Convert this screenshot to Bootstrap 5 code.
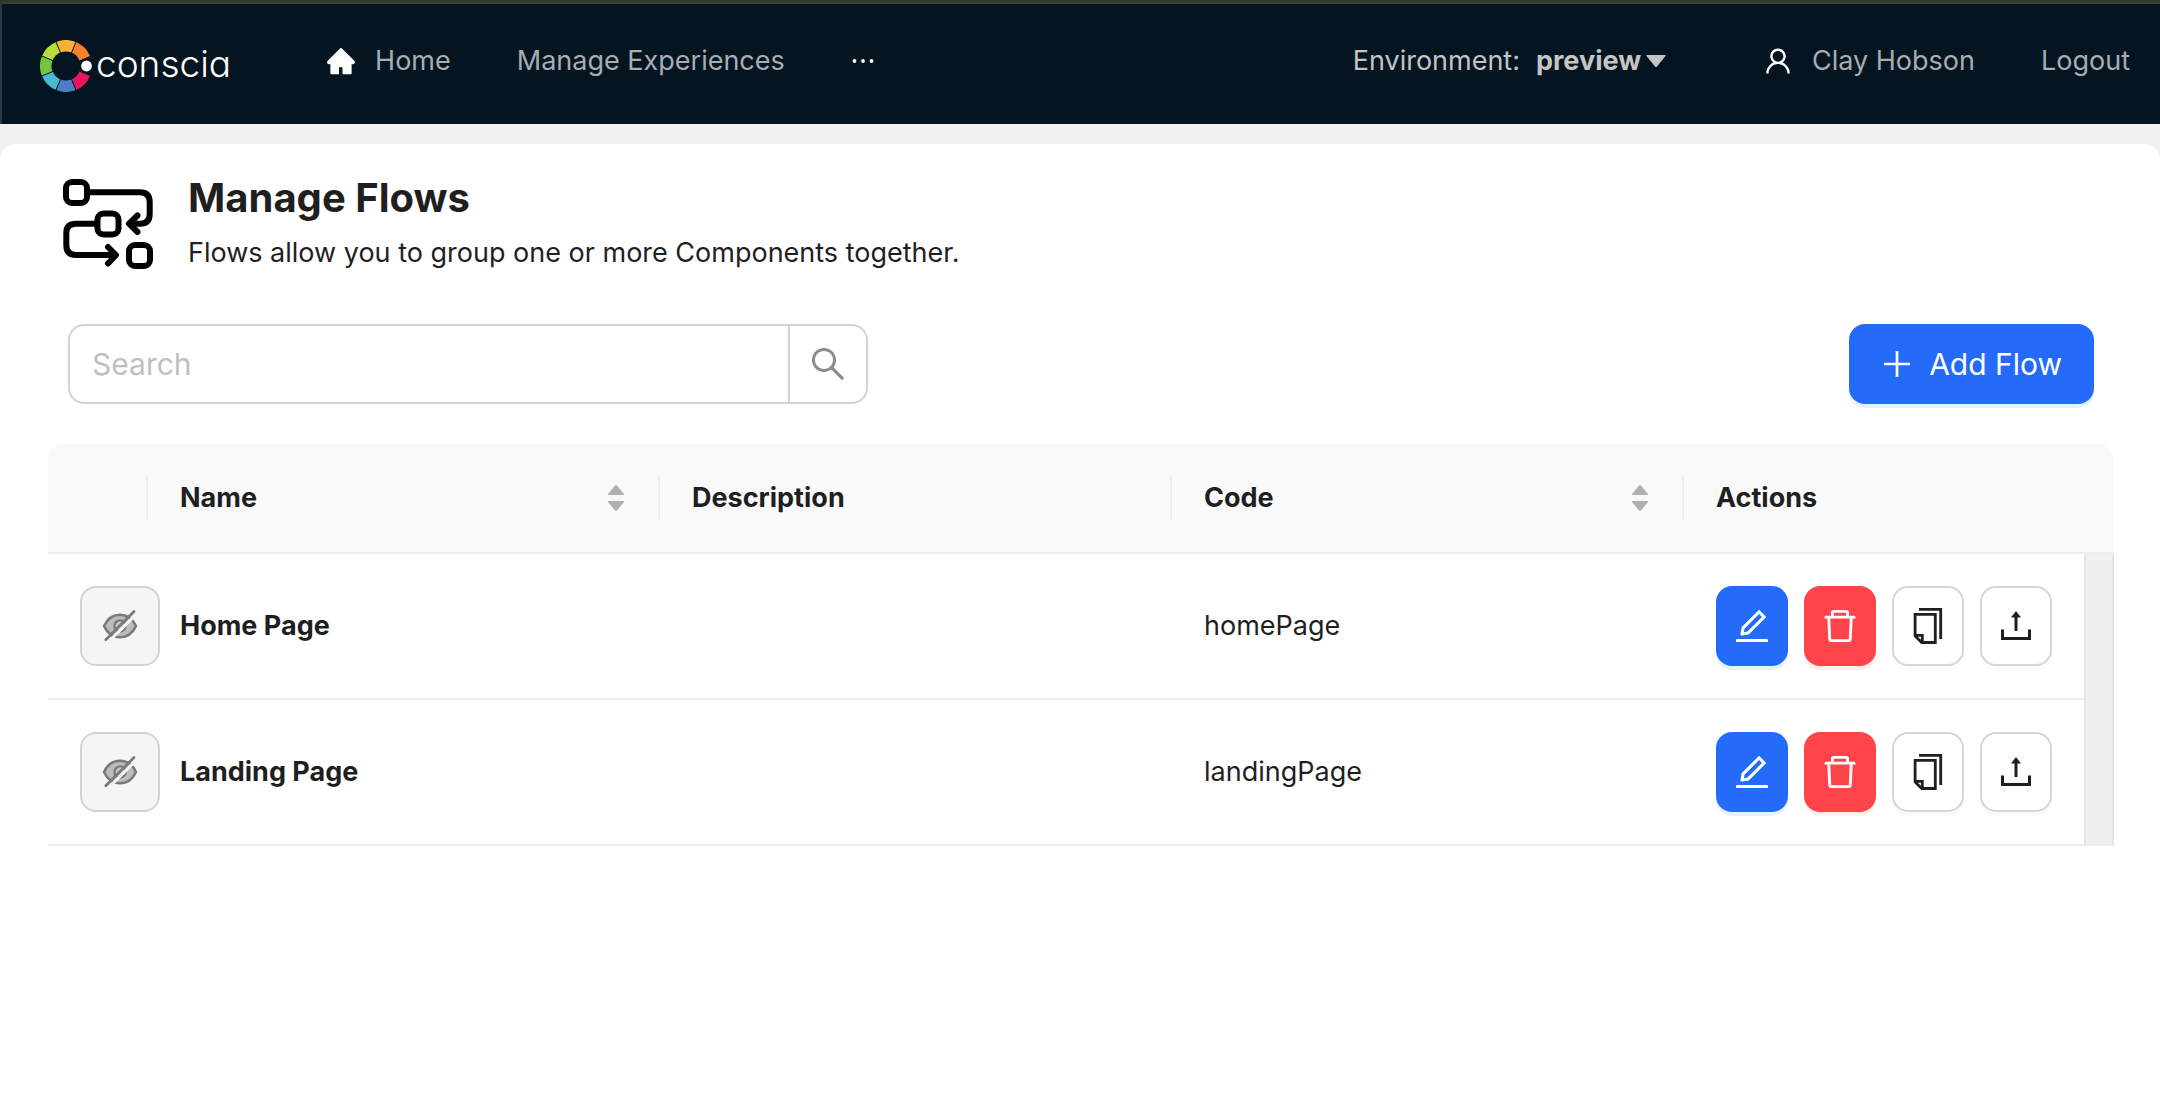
<!DOCTYPE html>
<html lang="en">
<head>
<meta charset="utf-8">
<meta name="viewport" content="width=device-width, initial-scale=1">
<title>Manage Flows</title>
<link href="https://cdn.jsdelivr.net/npm/bootstrap@5.3.0/dist/css/bootstrap.min.css" rel="stylesheet">
<style>
body{font-family:Inter,"Liberation Sans",sans-serif;font-size:27px;line-height:44px;color:#1f1f1f;background:#f1f1f1;min-height:100vh}
svg{display:block;flex:none}
.topbar{background:#041421;border-top:2px solid #3f3c34;border-left:2px solid #2b3843;box-shadow:0 -2px #2c3a28;margin-top:2px;height:122px;padding:0 30px 6px 38px}
.topbar a{color:#a7adb1;text-decoration:none}
.topbar svg{color:#fff}
.brand-link{margin-top:10px;gap:4px}
.topbar .brand-word{color:#fff;font-size:37px;font-weight:300;font-feature-settings:"cv11";padding-bottom:5px}
.menu-left{margin-left:96px;gap:66px}
.menu-right{gap:66px}
.icon-gap{gap:20px}
.env-box{color:#c4c4c4;gap:16px;margin-right:32px}
.env-box select{appearance:none;border:0;background:none;color:inherit;font-weight:700;padding:0;line-height:44px}
.env-box svg{color:#c4c4c4}
.sheet{border-radius:16px 16px 0 0;margin-top:20px;padding:32px 46px 0 48px}
.page-head{padding:3px 15px 0;gap:35px}
.page-head h1{font-size:40px;line-height:38px;font-weight:700;margin:0}
.page-head p{margin:14px 0 0;line-height:44px}
.tools{margin:49px 20px 40px}
.search-group{width:800px;max-width:60%}
.search-group .form-control,.search-group .btn{height:80px;border:2px solid #d3d3d3;border-radius:16px;font-size:30px}
.search-group .form-control{padding:0 22px;color:#1f1f1f}
.search-group .form-control::placeholder{color:#bfbfbf}
.search-group .btn{width:80px;margin-left:-2px!important;color:#8c8c8c;padding:0 20px;background:#fff}
.add-btn,.act-btn,.eye-btn{border-radius:16px;height:80px;display:flex;align-items:center;justify-content:center;padding:0}
.add-btn{font-size:30px;gap:16px;padding:0 32px;border:0}
.btn-blue,.btn-blue:hover{background:#246bf9;color:#fff;box-shadow:0 4px 0 #e6f1fe;border:0}
.btn-red,.btn-red:hover{background:#ff4549;color:#fff;box-shadow:0 4px 0 #fff0f0;border:0}
.btn-plain,.btn-plain:hover{background:#fff;color:#1f1f1f;box-shadow:0 4px 0 #fafafa;border:2px solid #d6d6d6}
.act-btn{width:72px}
.eye-btn,.eye-btn:disabled{width:80px;border:2px solid #d3d3d3;background:#f5f5f5;opacity:1;color:#7a7a7a}
.flow-table{table-layout:fixed;width:100%;border-collapse:separate;border-spacing:0}
.flow-table th,.flow-table td{border-bottom:2px solid #eee;padding:0 32px;vertical-align:middle}
.flow-table th{font-weight:700}
.flow-table thead th{height:110px;background-color:#f9f9f9}
.flow-table thead th:first-child{border-top-left-radius:16px}
.flow-table thead th:last-child{border-top-right-radius:16px}
.flow-table thead .split{background-image:linear-gradient(#eee,#eee);background-size:2px 45px;background-position:right center;background-repeat:no-repeat}
.flow-table tbody tr{height:146px}
.flow-table td.track{background:#f0f0f0;border:solid #e4e4e4;border-width:0 2px;padding:0}
.sort-btn{border:0;background:none;padding:0 3px 0 0;color:#b0b0b0}
.col-eye{width:100px}.col-act{width:400px}.col-track{width:30px}
</style>
</head>
<body class="d-flex flex-column">
<svg width="0" height="0" class="position-absolute" aria-hidden="true">
<defs>
<symbol id="i-edit" viewBox="64 64 896 896"><path fill="currentColor" d="M257.700 752c2 0 4-.2 6-.5L431.900 722c2-.4 3.900-1.300 5.300-2.800l423.900-423.900a9.960 9.960 0 0 0 0-14.100L694.900 114.900c-1.900-1.900-4.400-2.900-7.100-2.900s-5.200 1-7.100 2.900L256.800 538.800c-1.500 1.500-2.400 3.300-2.800 5.300l-29.500 168.200a33.500 33.500 0 0 0 9.400 29.800c6.600 6.400 14.900 9.900 23.800 9.900zm67.400-174.400L687.800 215l73.300 73.300-362.700 362.600-88.900 15.700 15.600-89zM880 836H144c-17.700 0-32 14.300-32 32v36c0 4.400 3.600 8 8 8h784c4.400 0 8-3.600 8-8v-36c0-17.700-14.300-32-32-32z"/></symbol>
<symbol id="i-delete" viewBox="64 64 896 896"><path fill="currentColor" d="M360 184h304v72h72v-80c0-35.300-28.700-64-64-64H352c-35.300 0-64 28.700-64 64v80h72v-72zm504 72H160c-17.700 0-32 14.300-32 32v32c0 4.400 3.600 8 8 8h60.400l24.700 523c1.600 34.100 29.800 61 63.900 61h454c34.200 0 62.300-26.800 63.900-61l24.700-523H888c4.400 0 8-3.600 8-8v-32c0-17.700-14.300-32-32-32zM731.300 840H292.700l-24.200-512h487l-24.200 512z"/></symbol>
<symbol id="i-copy" viewBox="0 0 30 36"><g fill="none" stroke="currentColor" stroke-width="2.800"><path d="M6 1.400H27.700V31"/><path d="M2.100 6.300H22.300V34.500H8.700L2.100 28ZM2.100 27.300H9.300V34.500"/></g></symbol>
<symbol id="i-upload" viewBox="0 0 30 30"><path d="M1.500 18.500V27.500H28.500V18.500M15 5V20" fill="none" stroke="currentColor" stroke-width="3"/><path fill="currentColor" d="M15 0l5 6.500H10z"/></symbol>
<symbol id="i-hidden" viewBox="0 0 36 36"><path d="M2 18C5.500 10.500 10.500 6.700 18 6.700S30.500 10.500 34 18C30.500 25.500 25.500 29.300 18 29.300S5.500 25.500 2 18Z" fill="#bcbcbc" stroke="currentColor" stroke-width="2.600" stroke-linejoin="round"/><circle cx="18" cy="18" r="5.600" fill="#c8c8c8" stroke="currentColor" stroke-width="2.400"/><path d="M35 5.400L6.400 34" stroke="#f5f5f5" stroke-width="3"/><path d="M32 3.600L3.800 31.800" stroke="currentColor" stroke-width="2.800" stroke-linecap="round"/></symbol>
<symbol id="i-sort" viewBox="0 0 18 26"><path fill="currentColor" d="M9 0l1 .5 7 8.500q.5 1-.5 1h-15q-1 0-.5-1l7-8.500zM9 26l1-.5 7-8.500q.5-1-.5-1h-15q-1 0-.5 1l7 8.500z"/></symbol>
</defs>
</svg>

<nav class="topbar d-flex align-items-center justify-content-between text-nowrap">
  <div class="d-flex align-items-center">
    <a href="#" class="brand-link d-flex align-items-center">
      <svg width="52" height="52" viewBox="-26 -26 52 52" aria-hidden="true">
        <g fill="none" stroke-width="11.500">
          <path stroke="#f5822b" d="M7.750 -18.700A20.250 20.250 0 0 1 18.700 -7.750"/>
          <path stroke="#f5b233" d="M-7.750 -18.700A20.250 20.250 0 0 1 7.750 -18.700"/>
          <path stroke="#b8dc38" d="M-18.700 -7.750A20.250 20.250 0 0 1 -7.750 -18.700"/>
          <path stroke="#74c43c" d="M-18.700 7.750A20.250 20.250 0 0 1 -18.700 -7.750"/>
          <path stroke="#48bbd2" d="M-7.750 18.700A20.250 20.250 0 0 1 -18.700 7.750"/>
          <path stroke="#4b7dc6" d="M7.750 18.700A20.250 20.250 0 0 1 -7.750 18.700"/>
          <path stroke="#e8155c" d="M18.700 7.750A20.250 20.250 0 0 1 7.750 18.700"/>
        </g>
        <path stroke="#041421" stroke-width="1" d="M5 -12L10.400 -25M-5 -12L-10.400 -25M-12 -5L-25 -10.400M-12 5L-25 10.400M-5 12L-10.400 25M5 12L10.400 25"/>
        <circle cx="20.500" cy="0" r="5.400" fill="#fff"/>
      </svg>
      <span class="brand-word">conscia</span>
    </a>
    <div class="menu-left d-flex align-items-center">
      <a href="#" class="icon-gap d-flex align-items-center">
        <svg width="28" height="28" viewBox="56 64 912 896"><path fill="currentColor" d="M946.500 505L534.600 93.400a31.930 31.930 0 0 0-45.200 0L77.500 505c-12 12-18.800 28.300-18.800 45.300 0 35.300 28.700 64 64 64h43.400V908c0 17.700 14.300 32 32 32H448V716h112v224h265.900c17.700 0 32-14.300 32-32V614.300h43.400c17 0 33.300-6.700 45.300-18.800 24.900-25 24.900-65.500-.1-90.500z"/></svg>
        Home</a>
      <a href="#">Manage Experiences</a>
      <a href="#" aria-label="More">
        <svg width="24" height="24" viewBox="0 0 24 24" fill="currentColor"><circle cx="3.500" cy="12" r="1.900"/><circle cx="12" cy="12" r="1.900"/><circle cx="20.500" cy="12" r="1.900"/></svg>
      </a>
    </div>
  </div>
  <div class="menu-right d-flex align-items-center">
    <div class="env-box d-flex align-items-center">
      <label for="env">Environment:</label>
      <div class="d-flex align-items-center gap-1">
        <select id="env"><option>preview</option></select>
        <svg width="20" height="12" viewBox="0 0 20 12"><path fill="currentColor" d="M1 0h18q1 0 .5 1L11 11.500q-1 1-2 0L.5 1Q0 0 1 0z"/></svg>
      </div>
    </div>
    <a href="#" class="icon-gap d-flex align-items-center">
      <svg width="28" height="28" viewBox="64 64 896 896"><path fill="currentColor" d="M858.500 763.600a374 374 0 0 0-80.600-119.500 375.630 375.630 0 0 0-119.500-80.600c-.4-.2-.8-.3-1.200-.5C719.500 518 760 444.700 760 362c0-137-111-248-248-248S264 225 264 362c0 82.700 40.500 156 102.800 201.100-.4.2-.8.3-1.200.5-44.800 18.900-85 46-119.500 80.600a375.630 375.630 0 0 0-80.600 119.500A371.700 371.700 0 0 0 136 901.800a8 8 0 0 0 8 8.200h60c4.400 0 7.900-3.500 8-7.800 2-77.200 33-149.500 87.800-204.300 56.700-56.700 132-87.900 212.200-87.900s155.500 31.200 212.200 87.900C779 752.700 810 825 812 902.200c.1 4.400 3.600 7.800 8 7.800h60a8 8 0 0 0 8-8.200c-1-47.800-10.900-94.300-29.500-138.200zM512 534c-45.900 0-89.100-17.900-121.600-50.400S340 407.900 340 362c0-45.900 17.900-89.100 50.400-121.600S466.100 190 512 190s89.100 17.900 121.600 50.400S684 316.100 684 362c0 45.900-17.900 89.100-50.400 121.600S557.900 534 512 534z"/></svg>
      Clay Hobson</a>
    <a href="#">Logout</a>
  </div>
</nav>

<main class="sheet bg-white flex-grow-1">
  <header class="page-head d-flex align-items-start">
    <svg width="90" height="90" viewBox="0 0 90 90" fill="none" stroke="#000" stroke-width="6" stroke-linecap="round" stroke-linejoin="round" aria-hidden="true">
      <rect x="3" y="3" width="21" height="21" rx="6"/><rect x="34.500" y="34.500" width="21" height="21" rx="6"/><rect x="66" y="66" width="21" height="21" rx="6"/>
      <path d="M25 13.300H77Q86.700 13.300 86.700 23V35Q86.700 44.700 77 44.700H68M74.500 36.500L66 44.700L74.500 53M33 44.700H13Q3.300 44.700 3.300 54V66Q3.300 76 13 76H51M45 68L53 76L45 84.500"/>
    </svg>
    <div>
      <h1>Manage Flows</h1>
      <p>Flows allow you to group one or more Components together.</p>
    </div>
  </header>

  <div class="tools d-flex justify-content-between align-items-center">
    <form class="search-group input-group" role="search">
      <input type="search" class="form-control" placeholder="Search" aria-label="Search flows">
      <button type="button" class="btn" aria-label="Search"><svg width="36" height="36" viewBox="64 64 896 896"><path fill="currentColor" d="M909.600 854.500L649.900 594.800C690.200 542.700 712 479 712 412c0-80.200-31.300-155.400-87.900-212.100-56.600-56.700-132-87.900-212.100-87.900s-155.500 31.300-212.100 87.900C143.200 256.500 112 331.800 112 412c0 80.100 31.300 155.500 87.900 212.100C256.500 680.800 331.800 712 412 712c67 0 130.600-21.800 182.700-62l259.700 259.600a8.200 8.200 0 0 0 11.600 0l43.600-43.500a8.200 8.200 0 0 0 0-11.600zM570.400 570.400C528 612.700 471.800 636 412 636s-116-23.300-158.400-65.600C211.300 528 188 471.800 188 412s23.300-116.100 65.600-158.400C296 211.300 352.200 188 412 188s116.100 23.200 158.400 65.600S636 352.200 636 412s-23.300 116.100-65.600 158.400z"/></svg></button>
    </form>
    <button type="button" class="btn add-btn btn-blue">
      <svg width="32" height="32" viewBox="0 0 32 32"><path d="M3 16H29M16 3V29" stroke="currentColor" stroke-width="2.700"/></svg>
      Add Flow</button>
  </div>

  <table class="flow-table">
    <colgroup><col class="col-eye"><col><col><col><col class="col-act"><col class="col-track"></colgroup>
    <thead>
      <tr>
        <th class="split"></th>
        <th class="split" scope="col"><div class="d-flex justify-content-between align-items-center">Name<button type="button" class="sort-btn" aria-label="Sort by name"><svg width="18" height="26"><use href="#i-sort"/></svg></button></div></th>
        <th class="split" scope="col">Description</th>
        <th class="split" scope="col"><div class="d-flex justify-content-between align-items-center">Code<button type="button" class="sort-btn" aria-label="Sort by code"><svg width="18" height="26"><use href="#i-sort"/></svg></button></div></th>
        <th scope="col" colspan="2">Actions</th>
      </tr>
    </thead>
    <tbody>
      <tr>
        <td><button type="button" class="btn eye-btn" disabled aria-label="Hidden"><svg width="36" height="36"><use href="#i-hidden"/></svg></button></td>
        <th scope="row">Home Page</th>
        <td></td>
        <td>homePage</td>
        <td><div class="d-flex gap-3">
          <button type="button" class="btn act-btn btn-blue" aria-label="Edit"><svg width="36" height="36"><use href="#i-edit"/></svg></button>
          <button type="button" class="btn act-btn btn-red" aria-label="Delete"><svg width="36" height="36"><use href="#i-delete"/></svg></button>
          <button type="button" class="btn act-btn btn-plain" aria-label="Copy"><svg width="30" height="36"><use href="#i-copy"/></svg></button>
          <button type="button" class="btn act-btn btn-plain" aria-label="Export"><svg width="30" height="30"><use href="#i-upload"/></svg></button>
        </div></td>
        <td class="track" rowspan="2"></td>
      </tr>
      <tr>
        <td><button type="button" class="btn eye-btn" disabled aria-label="Hidden"><svg width="36" height="36"><use href="#i-hidden"/></svg></button></td>
        <th scope="row">Landing Page</th>
        <td></td>
        <td>landingPage</td>
        <td><div class="d-flex gap-3">
          <button type="button" class="btn act-btn btn-blue" aria-label="Edit"><svg width="36" height="36"><use href="#i-edit"/></svg></button>
          <button type="button" class="btn act-btn btn-red" aria-label="Delete"><svg width="36" height="36"><use href="#i-delete"/></svg></button>
          <button type="button" class="btn act-btn btn-plain" aria-label="Copy"><svg width="30" height="36"><use href="#i-copy"/></svg></button>
          <button type="button" class="btn act-btn btn-plain" aria-label="Export"><svg width="30" height="30"><use href="#i-upload"/></svg></button>
        </div></td>
      </tr>
    </tbody>
  </table>
</main>
<script src="https://cdn.jsdelivr.net/npm/bootstrap@5.3.0/dist/js/bootstrap.bundle.min.js"></script>
</body>
</html>
